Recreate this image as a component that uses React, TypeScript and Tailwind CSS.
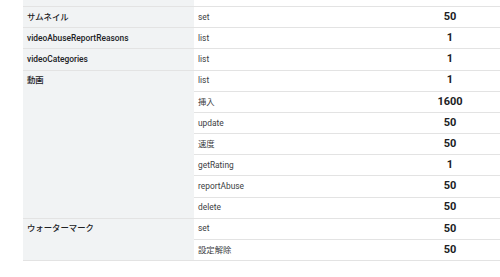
import React from "react";

type Group = { label: string; rows: [string, string][] };

const groups: Group[] = [
  { label: "", rows: [["delete", "50"]] },
  { label: "サムネイル", rows: [["set", "50"]] },
  { label: "videoAbuseReportReasons", rows: [["list", "1"]] },
  { label: "videoCategories", rows: [["list", "1"]] },
  {
    label: "動画",
    rows: [
      ["list", "1"],
      ["挿入", "1600"],
      ["update", "50"],
      ["速度", "50"],
      ["getRating", "1"],
      ["reportAbuse", "50"],
      ["delete", "50"],
    ],
  },
  {
    label: "ウォーターマーク",
    rows: [
      ["set", "50"],
      ["設定解除", "50"],
    ],
  },
];

export default function App() {
  return (
    <div
      className="w-[500px] h-[277px] overflow-hidden bg-white"
      style={{ fontFamily: 'Roboto, "Noto Sans CJK JP", sans-serif' }}
    >
      <div className="ml-[23px] -mt-[14px] border-b border-[#e3e3e3]">
        {groups.map((g, gi) => (
          <div key={gi} className={`flex ${gi === 0 ? "" : "border-t border-[#e3e3e3]"}`}>
            <div className="w-[171px] shrink-0 bg-[#f1f3f4] pl-[4px]">
              <div className="h-[20.17px] flex items-center text-[8.4px] font-medium text-[#202124]">
                {g.label}
              </div>
            </div>
            <div className="flex-1">
              {g.rows.map((r, ri) => (
                <div
                  key={ri}
                  className={`flex h-[20.17px] items-center ${ri === 0 ? "" : "border-t border-[#e3e3e3] h-[21.17px]"}`}
                >
                  <div className="w-[206px] pl-[4px] text-[8.4px] text-[#3c4043]">{r[0]}</div>
                  <div className="flex-1 text-center text-[11px] font-bold text-[#202124]">{r[1]}</div>
                </div>
              ))}
            </div>
          </div>
        ))}
      </div>
    </div>
  );
}
